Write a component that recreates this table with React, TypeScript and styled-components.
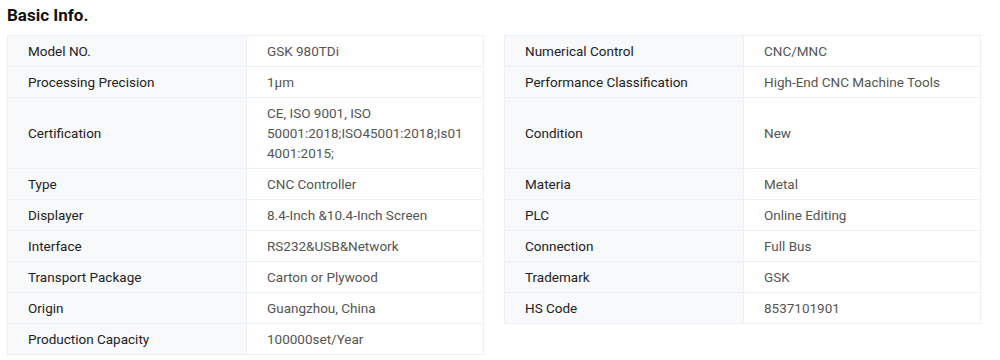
import React from 'react';
import styled, { createGlobalStyle } from 'styled-components';

const GlobalStyle = createGlobalStyle`
  body {
    margin: 0;
    background: #fff;
    font-family: Roboto, "Liberation Sans", Arial, sans-serif;
  }
`;

const Section = styled.section`
  padding: 4px 7px 0;
  width: 974px;
`;

const Title = styled.h2`
  margin: 0 0 8px;
  font-size: 17px;
  line-height: 23px;
  font-weight: 700;
  color: #111;
`;

const Line = styled.div<{ $first?: boolean }>`
  display: grid;
  grid-template-columns: 477px 477px;
  column-gap: 20px;
`;

const Pair = styled.div<{ $first?: boolean }>`
  display: grid;
  grid-template-columns: 239px 1fr;
  border: 1px solid #edf0f5;
  border-top: ${p => (p.$first ? '1px solid #edf0f5' : 'none')};
`;

const Cell = styled.div<{ $label?: boolean }>`
  display: flex;
  align-items: center;
  padding: 5px 20px;
  font-size: 13.5px;
  line-height: 20px;
  overflow-wrap: anywhere;
  color: ${p => (p.$label ? '#222' : '#555')};
  background: ${p => (p.$label ? '#f8f9fb' : '#fff')};
  border-right: ${p => (p.$label ? '1px solid #edf0f5' : 'none')};
`;

const left: [string, string][] = [
  ['Model NO.', 'GSK 980TDi'],
  ['Processing Precision', '1μm'],
  ['Certification', 'CE, ISO 9001, ISO 50001:2018;ISO45001:2018;Is014001:2015;'],
  ['Type', 'CNC Controller'],
  ['Displayer', '8.4-Inch &10.4-Inch Screen'],
  ['Interface', 'RS232&USB&Network'],
  ['Transport Package', 'Carton or Plywood'],
  ['Origin', 'Guangzhou, China'],
  ['Production Capacity', '100000set/Year'],
];

const right: [string, string][] = [
  ['Numerical Control', 'CNC/MNC'],
  ['Performance Classification', 'High-End CNC Machine Tools'],
  ['Condition', 'New'],
  ['Materia', 'Metal'],
  ['PLC', 'Online Editing'],
  ['Connection', 'Full Bus'],
  ['Trademark', 'GSK'],
  ['HS Code', '8537101901'],
];

function InfoPair({ item, first }: { item?: [string, string]; first: boolean }) {
  if (!item) return <div />;
  return (
    <Pair $first={first}>
      <Cell $label>{item[0]}</Cell>
      <Cell>{item[1]}</Cell>
    </Pair>
  );
}

export default function App() {
  return (
    <>
      <GlobalStyle />
      <Section>
        <Title>Basic Info.</Title>
        {left.map((item, i) => (
          <Line key={item[0]}>
            <InfoPair item={item} first={i === 0} />
            <InfoPair item={right[i]} first={i === 0} />
          </Line>
        ))}
      </Section>
    </>
  );
}
